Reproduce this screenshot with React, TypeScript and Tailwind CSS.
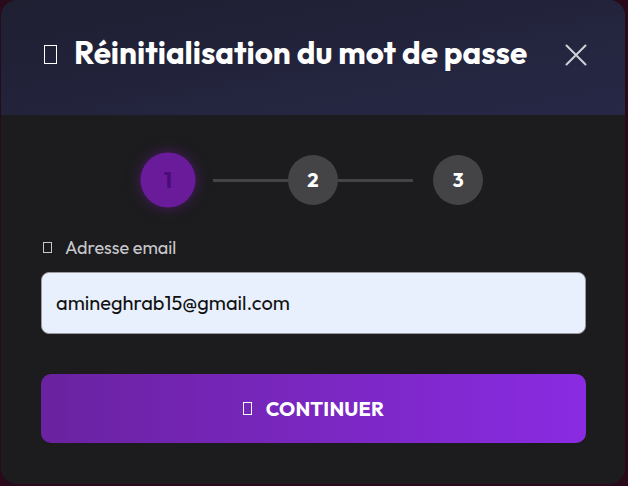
const Tofu = ({ className }: { className: string }) => (
  <span className={`inline-block border border-current ${className}`} />
);

const steps = [1, 2, 3];

export default function App() {
  return (
    <div
      className="min-h-[486px] w-full bg-[#2a0a1a] px-[1px] pt-0"
      style={{ fontFamily: 'Outfit, Lato, "Noto Sans", sans-serif' }}
    >
      <div className="w-[624px] h-[484px] rounded-[16px] overflow-hidden bg-[#1c1c1e] flex flex-col">
        {/* header */}
        <div className="h-[115px] bg-gradient-to-br from-[#1e1f31] to-[#272846] flex items-center justify-between pl-[43px] pr-[38px] pb-[10px]">
          <div className="flex items-center gap-[17px] text-white">
            <Tofu className="w-[13px] h-[19px] mt-[3px]" />
            <h2 className="text-[31.4px] font-bold leading-none">Réinitialisation du mot de passe</h2>
          </div>
          <svg width="22" height="22" viewBox="0 0 22 22" className="text-[#d0d0d8] mt-[4px]">
            <path d="M1.5 1.5 L20.5 20.5 M20.5 1.5 L1.5 20.5" stroke="currentColor" strokeWidth="2" strokeLinecap="round" />
          </svg>
        </div>

        {/* body */}
        <div className="flex-1 px-[39px] pt-[40px]">
          <div className="flex items-center justify-center">
            {steps.map((s, i) => (
              <div key={s} className="flex items-center">
                {i === 0 && (
                  <div className="w-[50px] h-[50px] rounded-full bg-[#6a1b9a] scale-110 shadow-[0_0_12px_rgba(106,27,154,0.6)] flex items-center justify-center text-[#4a0c7a] font-bold text-[20px]">
                    {s}
                  </div>
                )}
                {i === 1 && (
                  <>
                    <div className="w-[20px]" />
                    <div className="w-[75px] h-[3px] bg-[#444446]" />
                    <div className="w-[50px] h-[50px] rounded-full bg-[#444446] flex items-center justify-center text-white font-bold text-[20px]">
                      {s}
                    </div>
                  </>
                )}
                {i === 2 && (
                  <>
                    <div className="w-[75px] h-[3px] bg-[#444446]" />
                    <div className="w-[20px]" />
                    <div className="w-[50px] h-[50px] rounded-full bg-[#444446] flex items-center justify-center text-white font-bold text-[20px]">
                      {s}
                    </div>
                  </>
                )}
              </div>
            ))}
          </div>

          <div className="mt-[29px] flex items-center gap-[13px] text-[#c8c8cc] pl-[3px]">
            <Tofu className="w-[9px] h-[11px]" />
            <span className="text-[18px]">Adresse email</span>
          </div>

          <div className="mt-[11px] ml-[1px] h-[62px] rounded-[8px] bg-[#e8f0fe] border border-[#9a9aa0] flex items-center px-[14px] text-[20px] text-[#111]">
            amineghrab15@gmail.com
          </div>

          <button className="mt-[40px] ml-[1px] w-[545px] h-[69px] rounded-[10px] bg-gradient-to-r from-[#6a22a0] to-[#8a2be2] flex items-center justify-center gap-[14px] text-white font-bold text-[20px] tracking-[0.2px]">
            <Tofu className="w-[9px] h-[13px]" />
            CONTINUER
          </button>
        </div>
      </div>
    </div>
  );
}
